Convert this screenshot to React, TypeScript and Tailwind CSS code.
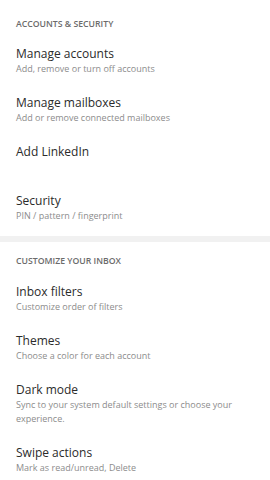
import React from "react";

type Item = { title: string; sub?: string };

const accounts: Item[] = [
  { title: "Manage accounts", sub: "Add, remove or turn off accounts" },
  { title: "Manage mailboxes", sub: "Add or remove connected mailboxes" },
  { title: "Add LinkedIn" },
  { title: "Security", sub: "PIN / pattern / fingerprint" },
];

const inbox: Item[] = [
  { title: "Inbox filters", sub: "Customize order of filters" },
  { title: "Themes", sub: "Choose a color for each account" },
  {
    title: "Dark mode",
    sub: "Sync to your system default settings or choose your experience.",
  },
  { title: "Swipe actions", sub: "Mark as read/unread, Delete" },
];

function Row({ item }: { item: Item }) {
  return (
    <div className="pl-4 pr-6 pt-[10px] pb-[9px]">
      <div className="text-[12px] leading-4 text-[#2b2b2b]">{item.title}</div>
      <div className="text-[9px] leading-[14px] text-[#8c8c8c] min-h-[14px]">
        {item.sub}
      </div>
    </div>
  );
}

export default function App() {
  return (
    <div
      className="w-[270px] h-[480px] overflow-hidden bg-white"
      style={{ fontFamily: '"Open Sans", sans-serif' }}
    >
      <div className="pl-4 pt-[18px] pb-[6px] text-[8.7px] leading-3 font-semibold text-[#6b6b6b]">
        ACCOUNTS &amp; SECURITY
      </div>
      {accounts.map((it) => (
        <Row key={it.title} item={it} />
      ))}
      <div className="mt-1 h-[6px] bg-[#f1f1f1]" />
      <div className="pl-4 pt-[13px] pb-[7px] text-[8.7px] leading-3 font-semibold text-[#6b6b6b]">
        CUSTOMIZE YOUR INBOX
      </div>
      {inbox.map((it) => (
        <Row key={it.title} item={it} />
      ))}
    </div>
  );
}
